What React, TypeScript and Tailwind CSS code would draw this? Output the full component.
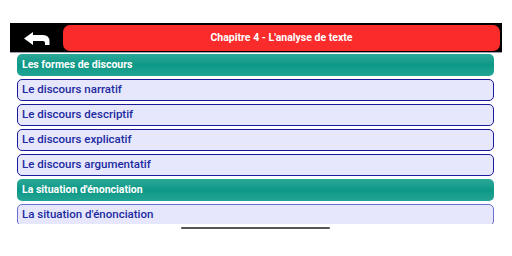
const topics = [
  { label: "Les formes de discours", header: true },
  { label: "Le discours narratif" },
  { label: "Le discours descriptif" },
  { label: "Le discours explicatif" },
  { label: "Le discours argumentatif" },
  { label: "La situation d'énonciation", header: true },
  { label: "La situation d'énonciation", faded: true },
];

function BackArrow() {
  return (
    <svg width="26" height="14" viewBox="0 0 26 14" fill="white">
      <path d="M0 6.5 L9 0 L9 3 L19 3 Q25.5 3 25.5 9.5 L25.5 13 L21 13 L21 11 Q21 9 19 9 L9 9 L9 13 Z" />
    </svg>
  );
}

export default function App() {
  return (
    <div
      className="w-[512px] h-[256px] bg-white overflow-hidden"
      style={{ fontFamily: "Roboto, 'Liberation Sans', sans-serif" }}
    >
      {/* Top bar */}
      <div className="pt-[23px] pl-[10px] w-[502px]">
        <div className="h-[30px] bg-black flex items-center border-b border-gray-400">
          <div className="w-[53px] flex justify-center pt-[2px]">
            <BackArrow />
          </div>
          <div className="flex-1 mr-[2px] h-[26px] bg-[#f92b2b] rounded-[7px] flex items-center justify-center">
            <span className="text-white text-[10.5px] font-bold">Chapitre 4 - L'analyse de texte</span>
          </div>
        </div>
      </div>

      {/* List */}
      <div className="ml-[17px] w-[477px] mt-px h-[170px] overflow-hidden flex flex-col gap-[3px]">
        {topics.map((t, i) =>
          t.header ? (
            <div
              key={i}
              className="shrink-0 h-[22px] rounded-[5px] bg-gradient-to-b from-[#2aa898] via-[#0b9886] to-[#22a594] flex items-center px-[5px]"
            >
              <span className="text-white text-[10.5px] font-bold">{t.label}</span>
            </div>
          ) : (
            <div
              key={i}
              className={`shrink-0 h-[22px] rounded-[5px] bg-[#e6e7fc] border flex items-center px-[4px] ${
                t.faded ? "border-[#6b6fd0]" : "border-[#1a1a9a]"
              }`}
            >
              <span className="text-[#1c2aa0] text-[11.5px] font-medium">{t.label}</span>
            </div>
          )
        )}
      </div>

      <div className="ml-[181px] mt-[3px] w-[149px] h-[2px] rounded-full bg-[#555555]" />
    </div>
  );
}
